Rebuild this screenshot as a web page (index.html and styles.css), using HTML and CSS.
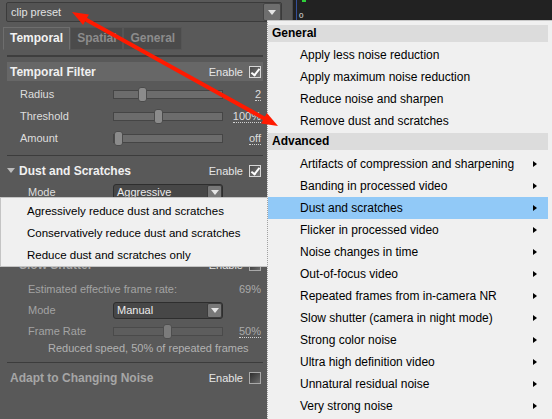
FILE: index.html
```html
<!DOCTYPE html>
<html>
<head>
<meta charset="utf-8">
<link rel="stylesheet" href="styles.css">
</head>
<body>
<div class="screen">
  <div class="panel">
    <div class="preset">
      <div class="combo combo-preset">
        <span class="combo-text">clip preset</span>
        <span class="combo-btn"><i class="tri"></i></span>
      </div>
    </div>
    <div class="tabs">
      <div class="tab active">Temporal</div>
      <div class="tab">Spatial</div>
      <div class="tab">General</div>
    </div>
    <div class="content">
      <div class="sec-head hl">
        <span class="sec-title">Temporal Filter</span>
        <span class="enable">Enable <span class="check on"></span></span>
      </div>
      <div class="row first">
        <span class="label">Radius</span>
        <div class="slider"><span class="thumb" style="left:24px"></span></div>
        <span class="value"><span class="dotted">2</span></span>
      </div>
      <div class="row">
        <span class="label">Threshold</span>
        <div class="slider"><span class="thumb" style="left:40px"></span></div>
        <span class="value"><span class="dotted">100%</span></span>
      </div>
      <div class="row">
        <span class="label">Amount</span>
        <div class="slider"><span class="thumb" style="left:0px"></span></div>
        <span class="value"><span class="dotted">off</span></span>
      </div>
      <div class="sep"></div>

      <div class="sec-head">
        <span class="sec-title"><i class="caret"></i>Dust and Scratches</span>
        <span class="enable">Enable <span class="check on"></span></span>
      </div>
      <div class="row sub mode-row">
        <span class="label">Mode</span>
        <div class="combo combo-sm"><span class="combo-text">Aggressive</span><span class="combo-btn"><i class="tri"></i></span></div>
        <span class="value"></span>
      </div>
      <div class="covered"></div>
      <div class="sep sep-hidden"></div>

      <div class="sec-head off slow-head">
        <span class="sec-title"><i class="caret"></i>Slow Shutter</span>
        <span class="enable">Enable <span class="check"></span></span>
      </div>
      <div class="row sub dis est">
        <span class="label">Estimated effective frame rate:</span>
        <span class="value">69%</span>
      </div>
      <div class="row sub dis">
        <span class="label">Mode</span>
        <div class="combo combo-sm tall"><span class="combo-text">Manual</span><span class="combo-btn"><i class="tri"></i></span></div>
        <span class="value"></span>
      </div>
      <div class="row sub dis fr">
        <span class="label">Frame Rate</span>
        <div class="slider disabled"><span class="thumb" style="left:49px"></span></div>
        <span class="value"><span class="dotted">50%</span></span>
      </div>
      <div class="note">Reduced speed, 50% of repeated frames</div>
      <div class="sep sep2"></div>

      <div class="sec-head off">
        <span class="sec-title">Adapt to Changing Noise</span>
        <span class="enable">Enable <span class="check"></span></span>
      </div>
    </div>
  </div>
  <div class="side">
    <div class="meter">
      <span class="meter-level"></span>
      <span class="meter-zero">0</span>
    </div>
  </div>

  <div class="popup">
    <div class="pop-item">Agressively reduce dust and scratches</div>
    <div class="pop-item">Conservatively reduce dust and scratches</div>
    <div class="pop-item">Reduce dust and scratches only</div>
  </div>

  <div class="menu">
    <div class="menu-head">General</div>
    <div class="menu-item"><span>Apply less noise reduction</span></div>
    <div class="menu-item"><span>Apply maximum noise reduction</span></div>
    <div class="menu-item"><span>Reduce noise and sharpen</span></div>
    <div class="menu-item"><span>Remove dust and scratches</span></div>
    <div class="menu-head adv">Advanced</div>
    <div class="menu-item"><span>Artifacts of compression and sharpening</span><i class="sub-arrow"></i></div>
    <div class="menu-item"><span>Banding in processed video</span><i class="sub-arrow"></i></div>
    <div class="menu-item active"><span>Dust and scratches</span><i class="sub-arrow"></i></div>
    <div class="menu-item"><span>Flicker in processed video</span><i class="sub-arrow"></i></div>
    <div class="menu-item"><span>Noise changes in time</span><i class="sub-arrow"></i></div>
    <div class="menu-item"><span>Out-of-focus video</span><i class="sub-arrow"></i></div>
    <div class="menu-item"><span>Repeated frames from in-camera NR</span><i class="sub-arrow"></i></div>
    <div class="menu-item"><span>Slow shutter (camera in night mode)</span><i class="sub-arrow"></i></div>
    <div class="menu-item"><span>Strong color noise</span><i class="sub-arrow"></i></div>
    <div class="menu-item"><span>Ultra high definition video</span><i class="sub-arrow"></i></div>
    <div class="menu-item"><span>Unnatural residual noise</span><i class="sub-arrow"></i></div>
    <div class="menu-item"><span>Very strong noise</span><i class="sub-arrow"></i></div>
  </div>

  <svg class="annot" width="552" height="419" viewBox="0 0 552 419">
    <line x1="84" y1="18.6" x2="266" y2="119.4" stroke="#ff1a00" stroke-width="4"/>
    <polygon points="72,12 83.1,25.0 88.9,14.5" fill="#ff1a00"/>
    <polygon points="278,126 261.1,123.6 266.9,113.0" fill="#ff1a00"/>
  </svg>
</div>
</body>
</html>
```

FILE: styles.css
```css
* { box-sizing: border-box; }
html, body { margin: 0; padding: 0; }
body {
  width: 552px;
  height: 419px;
  overflow: hidden;
  background: #222;
  font-family: "Liberation Sans", Arial, sans-serif;
}
.screen {
  position: relative;
  display: flex;
  width: 552px;
  height: 419px;
}

/* ---------- left panel ---------- */
.panel {
  width: 293px;
  height: 419px;
  flex: none;
  background: #595959;
  border-right: 1px solid #4a4a4a;
}
.preset { padding: 2px 10px 0 6px; }
.combo {
  display: flex;
  align-items: stretch;
  background: #535353;
  border: 1px solid #3b3b3b;
}
.combo-preset { height: 20px; border-radius: 2px; }
.combo-text {
  flex: 1;
  color: #e2e2e2;
  font-size: 11px;
  padding-left: 4px;
  display: flex;
  align-items: center;
  white-space: nowrap;
  overflow: hidden;
}
.combo-btn {
  width: 18px;
  background: #6e6e6e;
  border: 1px solid #454545;
  border-radius: 2px;
  display: flex;
  align-items: center;
  justify-content: center;
}
.tri {
  width: 0; height: 0;
  border-top: 5px solid #e6e6e6;
  border-left: 4px solid transparent;
  border-right: 4px solid transparent;
}

.tabs {
  display: flex;
  margin-top: 5px;
  padding-left: 3px;
  height: 23px;
}
.tab {
  height: 23px;
  line-height: 21px;
  padding: 0 6px;
  background: #4b4b4b;
  border: 1px solid #555;
  color: #8c8c8c;
  font-weight: bold;
  font-size: 12px;
}
.tab.active {
  background: #5a5a5a;
  border-color: #6e6e6e;
  border-bottom-color: #5a5a5a;
  color: #f2f2f2;
}

.content {
  margin: 5px 0 0 7px;
  width: 256px;
  border-top: 2px solid #3e3e3e;
}
.sec-head {
  display: flex;
  align-items: center;
  justify-content: space-between;
  height: 19px;
  margin-top: 5px;
  padding: 0 2px 0 0;
}
.sec-head.hl {
  background: #676767;
  padding-left: 3px;
}
.sec-title {
  display: flex;
  align-items: center;
  color: #f0f0f0;
  font-weight: bold;
  font-size: 12px;
  white-space: nowrap;
}
.sec-head.off .sec-title { color: #a6a6a6; padding-left: 3px; }
.sec-head.slow-head .sec-title { padding-left: 0; }
.caret {
  width: 0; height: 0;
  border-top: 5px solid #bcbcbc;
  border-left: 4px solid transparent;
  border-right: 4px solid transparent;
  margin-right: 4px;
}
.enable {
  display: flex;
  align-items: center;
  gap: 6px;
  color: #e6e6e6;
  font-size: 11px;
}
.check {
  position: relative;
  width: 12px;
  height: 12px;
  border: 1px solid #a9a9a9;
  background: linear-gradient(135deg, #2e2e2e, #6c6c6c);
}
.check.on {
  border-color: #d6d6d6;
  background: linear-gradient(135deg, #4a4a4a, #7a7a7a);
}
.check.on::after {
  content: "";
  position: absolute;
  left: 3px;
  top: 0px;
  width: 3px;
  height: 7px;
  border: solid #ffffff;
  border-width: 0 2px 2px 0;
  transform: rotate(38deg);
}

.row {
  display: grid;
  grid-template-columns: 106px 110px 1fr;
  align-items: center;
  height: 22px;
  font-size: 11px;
  color: #dedede;
}
.row.first { margin-top: 2px; }
.label { padding-left: 13px; white-space: nowrap; }
.row.sub .label { padding-left: 21px; }
.value {
  text-align: right;
  padding-right: 2px;
  white-space: nowrap;
}
.dotted {
  border-bottom: 1px dotted #d0d0d0;
  line-height: 12px;
  display: inline-block;
}
.slider {
  position: relative;
  height: 9px;
  background: #6c6c6c;
  border: 1px solid #454545;
}
.thumb {
  position: absolute;
  top: -4px;
  width: 9px;
  height: 15px;
  background: #8b8b8b;
  border: 1px solid #4b4b4b;
  border-radius: 3px;
}
.slider.disabled { background: #5d5d5d; border-color: #4a4a4a; }
.slider.disabled .thumb { background: #7b7b7b; border-color: #4e4e4e; }

.mode-row { margin-top: 1px; }
.combo-sm {
  height: 16px;
  background: #474747;
  border: 1px solid #2e2e2e;
  border-radius: 3px;
}
.combo-sm.tall { height: 17px; }
.combo-sm .combo-text { padding-left: 3px; color: #ececec; }
.combo-sm .combo-btn { width: 15px; background: #787878; border-color: #3c3c3c; }

.covered { height: 48px; }
.sep { border-top: 1px solid #3c3c3c; margin-top: 6px; }
.sep-hidden { margin-top: 0; }
.slow-head { margin-top: 3px; }
.row.dis { color: #a3a3a3; }
.row.dis .value { color: #ababab; }
.row.est { height: 21px; margin-top: 4px; grid-template-columns: 216px 1fr; }
.row.fr { height: 20px; }
.note {
  height: 14px;
  line-height: 14px;
  padding-left: 41px;
  font-size: 11px;
  color: #b2b2b2;
  white-space: nowrap;
}
.sep2 { margin-top: 7px; }

/* ---------- right dark strip ---------- */
.side {
  flex: 1;
  background: #222;
  padding-left: 3px;
}
.meter {
  width: 14px;
  height: 20px;
  border-left: 1px solid #35509a;
  display: flex;
  flex-direction: column;
  align-items: flex-start;
  padding-left: 5px;
}
.meter-level { width: 4px; height: 3px; background: #2fd03a; }
.meter-zero {
  font-size: 8px;
  line-height: 8px;
  color: #e0e0e0;
  margin: 10px 0 0 -3px;
}

/* ---------- popup list ---------- */
.popup {
  position: absolute;
  left: 0;
  top: 197px;
  width: 268px;
  height: 70px;
  background: #f0f0f0;
  border: 1px solid #c4c4c4;
  border-right: 1px dotted #a8a8a8;
  padding: 2px 0;
}
.pop-item {
  height: 22px;
  line-height: 22px;
  padding-left: 26px;
  font-size: 11.5px;
  color: #000;
  white-space: nowrap;
}

/* ---------- menu ---------- */
.menu {
  position: absolute;
  left: 267px;
  top: 20px;
  width: 285px;
  height: 399px;
  background: #f0f0f0;
  border-left: 1px dotted #a0a0a0;
  border-top: 1px solid #c8c8c8;
  padding: 3px 4px 0 0;
  font-size: 12px;
  color: #000;
}
.menu-head {
  height: 17px;
  line-height: 17px;
  margin: 1px 0 2px;
  padding-left: 4px;
  background: #dcdcdc;
  font-weight: bold;
}
.menu-head.adv { margin-bottom: 3px; }
.menu-item {
  display: flex;
  align-items: center;
  justify-content: space-between;
  height: 22px;
  padding: 0 11px 0 32px;
  white-space: nowrap;
}
.menu-item.active { background: #91c9f7; }
.sub-arrow {
  width: 0; height: 0;
  border-left: 4px solid #000;
  border-top: 3.5px solid transparent;
  border-bottom: 3.5px solid transparent;
}

/* ---------- annotation ---------- */
.annot {
  position: absolute;
  left: 0;
  top: 0;
  pointer-events: none;
}
```
